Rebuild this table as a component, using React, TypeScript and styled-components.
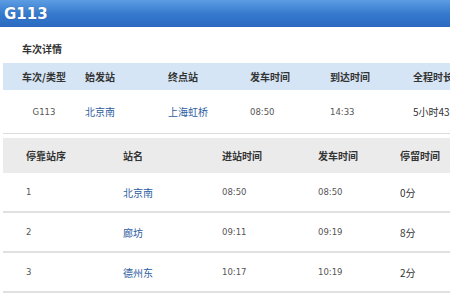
import React from 'react'
import styled, { createGlobalStyle } from 'styled-components'

const GlobalStyle = createGlobalStyle`
  body {
    margin: 0;
    background: #fff;
    overflow: hidden;
    font-family: "Noto Sans CJK SC", "Liberation Sans", sans-serif;
  }
`

const Page = styled.div`
  width: 520px;
  height: 300px;
  overflow: hidden;
`

const TitleBar = styled.div`
  height: 27px;
  display: flex;
  align-items: center;
  padding-left: 4px;
  background: linear-gradient(#5c9de2, #3478cc 55%, #2a6ac0);
  color: #fff;
  font-family: "DejaVu Sans", sans-serif;
  font-weight: bold;
  font-size: 15px;
  text-shadow: 0 0 1px rgba(0, 0, 0, 0.35);
`

const SectionTitle = styled.div`
  padding: 14px 0 0 22px;
  height: 22px;
  font-size: 10px;
  font-weight: bold;
  color: #333;
`

const TrainTable = styled.div`
  margin-left: 3px;
`

const TrainRow = styled.div<{ $head?: boolean }>`
  display: grid;
  grid-template-columns: 82px 83px 82px 80px 83px 110px;
  align-items: center;
  height: ${p => (p.$head ? '27px' : '43px')};
  background: ${p => (p.$head ? '#d5e5f5' : '#fff')};
  border-bottom: ${p => (p.$head ? 'none' : '1px solid #dcdcdc')};
  font-size: 10px;
  font-weight: ${p => (p.$head ? 'bold' : 'normal')};
  color: #333;
`

const Cell = styled.div<{ $center?: boolean; $link?: boolean; $num?: boolean }>`
  text-align: ${p => (p.$center ? 'center' : 'left')};
  color: ${p => (p.$link ? '#2d5d9e' : p.$num ? '#555' : 'inherit')};
  font-family: ${p => (p.$num ? '"DejaVu Sans", "Noto Sans CJK SC", sans-serif' : 'inherit')};
  font-size: ${p => (p.$num ? '8.5px' : '10px')};
  white-space: nowrap;
`

const StopTable = styled.div`
  margin: 4px 0 0 3px;
`

const StopRow = styled.div<{ $head?: boolean }>`
  display: grid;
  grid-template-columns: 97px 99px 96px 82px 100px;
  align-items: center;
  padding-left: 23px;
  height: ${p => (p.$head ? '35px' : '38px')};
  background: ${p => (p.$head ? '#ebebeb' : '#fff')};
  border-bottom: ${p => (p.$head ? 'none' : '2px solid #e0e0e0')};
  font-size: 10px;
  font-weight: ${p => (p.$head ? 'bold' : 'normal')};
  color: #333;
`

const stops = [
  { no: '1', name: '北京南', arrive: '08:50', depart: '08:50', stay: '0分' },
  { no: '2', name: '廊坊', arrive: '09:11', depart: '09:19', stay: '8分' },
  { no: '3', name: '德州东', arrive: '10:17', depart: '10:19', stay: '2分' },
]

export default function App() {
  return (
    <Page>
      <GlobalStyle />
      <TitleBar>G113</TitleBar>
      <SectionTitle>车次详情</SectionTitle>
      <TrainTable>
        <TrainRow $head>
          <Cell $center>车次/类型</Cell>
          <Cell>始发站</Cell>
          <Cell>终点站</Cell>
          <Cell>发车时间</Cell>
          <Cell>到达时间</Cell>
          <Cell>全程时长</Cell>
        </TrainRow>
        <TrainRow>
          <Cell $center $num>G113</Cell>
          <Cell $link>北京南</Cell>
          <Cell $link>上海虹桥</Cell>
          <Cell $num>08:50</Cell>
          <Cell $num>14:33</Cell>
          <Cell>5小时43分</Cell>
        </TrainRow>
      </TrainTable>
      <StopTable>
        <StopRow $head>
          <Cell>停靠站序</Cell>
          <Cell>站名</Cell>
          <Cell>进站时间</Cell>
          <Cell>发车时间</Cell>
          <Cell>停留时间</Cell>
        </StopRow>
        {stops.map(s => (
          <StopRow key={s.no}>
            <Cell $num>{s.no}</Cell>
            <Cell $link>{s.name}</Cell>
            <Cell $num>{s.arrive}</Cell>
            <Cell $num>{s.depart}</Cell>
            <Cell>{s.stay}</Cell>
          </StopRow>
        ))}
      </StopTable>
    </Page>
  )
}
